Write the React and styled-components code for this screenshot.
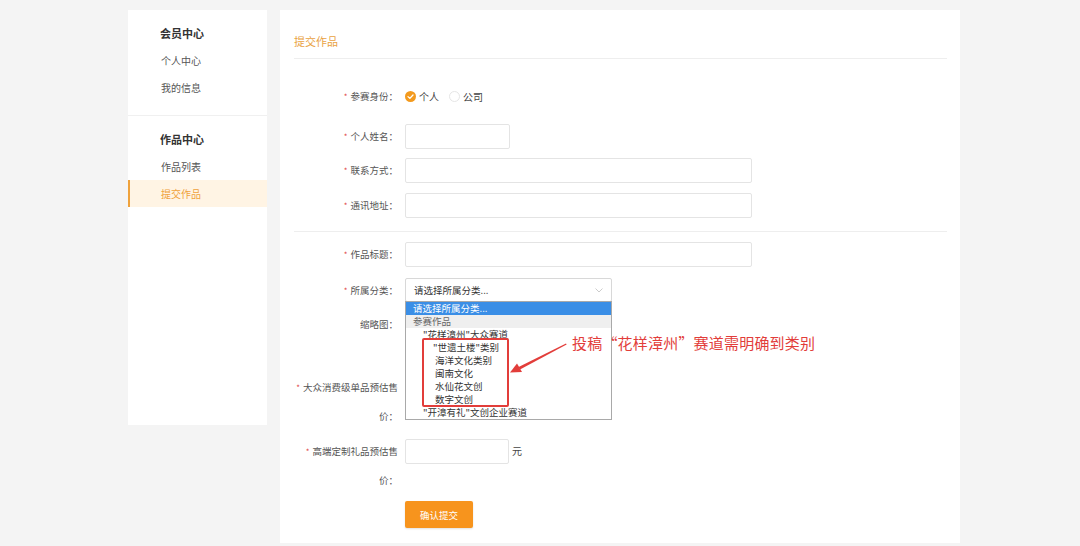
import React from "react";
import styled, { createGlobalStyle } from "styled-components";

const GlobalStyle = createGlobalStyle`
  * {
    box-sizing: border-box;
  }
  body {
    margin: 0;
    background: #f4f4f4;
    font-family: "Noto Sans CJK SC", "Noto Sans", sans-serif;
    color: #333;
  }
`;

const Page = styled.div`
  display: flex;
  align-items: flex-start;
  gap: 13px;
  padding: 10px 0 0 128px;
  height: 546px;
`;

/* ---------- sidebar ---------- */

const Sidebar = styled.aside`
  width: 139px;
  height: 415px;
  background: #fff;
`;

const MenuGroup = styled.div`
  padding: ${(p) => (p.$last ? "10px 0 0" : "10px 0 14px")};
  border-bottom: ${(p) => (p.$last ? "none" : "1px solid #f0f0f0")};
`;

const MenuTitle = styled.div`
  height: 27px;
  line-height: 27px;
  padding-left: 32px;
  font-size: 11px;
  font-weight: bold;
  color: #333;
`;

const MenuItem = styled.div`
  height: 27px;
  line-height: 27px;
  padding-left: ${(p) => (p.$active ? "31px" : "33px")};
  font-size: 10px;
  color: ${(p) => (p.$active ? "#efa23c" : "#555")};
  background: ${(p) => (p.$active ? "#fff4e4" : "transparent")};
  border-left: ${(p) => (p.$active ? "2px solid #efa23c" : "none")};
`;

/* ---------- main panel ---------- */

const Main = styled.main`
  position: relative;
  width: 680px;
  height: 533px;
  background: #fff;
  padding: 0 13px 0 14px;
`;

const Header = styled.div`
  padding: 22px 0 8px;
  border-bottom: 1px solid #eeeeee;
  font-size: 11px;
  line-height: 18px;
  color: #e9a23f;
`;

const Section = styled.div`
  display: flex;
  flex-direction: column;
  padding-bottom: ${(p) => p.$pb || 0}px;
  border-bottom: ${(p) => (p.$line ? "1px solid #eeeeee" : "none")};
`;

const Row = styled.div`
  display: flex;
  align-items: flex-start;
  gap: 7px;
  margin-top: ${(p) => p.$mt || 0}px;
  min-height: ${(p) => p.$h || 0}px;
`;

const Label = styled.div`
  flex: none;
  width: 104px;
  text-align: right;
  font-size: 9.5px;
  line-height: ${(p) => p.$lh || 25}px;
  color: #555;
`;

const Req = styled.span`
  color: #e04545;
  font-size: 8px;
  margin-right: 3px;
`;

const Input = styled.div`
  width: ${(p) => p.$w}px;
  height: 25px;
  margin-top: ${(p) => p.$mt || 0}px;
  border: 1px solid #e4e4e4;
  border-radius: 2px;
  background: #fff;
`;

const Unit = styled.span`
  font-size: 10px;
  line-height: 28px;
  color: #444;
  margin-left: -4px;
`;

const RadioGroup = styled.div`
  display: flex;
  align-items: center;
  height: 25px;
  gap: 10px;
`;

const RadioOption = styled.label`
  display: flex;
  align-items: center;
  gap: 3px;
  font-size: 10px;
  color: #444;
`;

const RadioEmpty = styled.span`
  width: 11px;
  height: 11px;
  border-radius: 50%;
  border: 1px solid #e6e6e6;
`;

const SelectWrap = styled.div`
  position: relative;
  width: 207px;
`;

const Select = styled.div`
  display: flex;
  align-items: center;
  justify-content: space-between;
  height: 24px;
  padding: 0 8px 0 8px;
  border: 1px solid #d8d8d8;
  border-radius: 2px;
  font-size: 9.5px;
  color: #333;
`;

const Dropdown = styled.ul`
  position: absolute;
  z-index: 5;
  top: 23px;
  left: 0;
  width: 207px;
  margin: 0;
  padding: 0;
  list-style: none;
  background: #fff;
  border: 1px solid #a9a9a9;
`;

const Option = styled.li`
  height: 13px;
  line-height: 13px;
  padding-left: ${(p) => 7 + p.$level * 10}px;
  font-size: 9.5px;
  white-space: nowrap;
  color: ${(p) => (p.$selected ? "#fff" : p.$group ? "#666" : "#333")};
  background: ${(p) =>
    p.$selected ? "#3a8ee6" : p.$group ? "#efefef" : "transparent"};
`;

const UploadSlot = styled.div`
  width: 80px;
  height: 50px;
  border: 1px dashed #ddd;
`;

const SubmitButton = styled.button`
  width: 68px;
  height: 27px;
  border: none;
  border-radius: 2px;
  background: #f7941d;
  color: #fff;
  font-family: inherit;
  font-size: 9.5px;
  box-shadow: 0 1px 2px rgba(0, 0, 0, 0.12);
`;

/* ---------- annotation overlay ---------- */

const MarkBox = styled.div`
  position: absolute;
  z-index: 6;
  left: 142px;
  top: 328px;
  width: 87px;
  height: 69px;
  border: 2px solid #e23d3a;
  border-radius: 2px;
`;

const MarkArrow = styled.svg`
  position: absolute;
  z-index: 6;
  left: 226px;
  top: 328px;
`;

const MarkText = styled.div`
  position: absolute;
  z-index: 6;
  left: 292px;
  top: 323px;
  font-size: 15px;
  line-height: 20px;
  letter-spacing: 0.2px;
  color: #e23d3a;
  white-space: nowrap;
`;

const categories = [
  { text: "请选择所属分类...", level: 0, selected: true },
  { text: "参赛作品", level: 0, group: true },
  { text: '"花样漳州"大众赛道', level: 1 },
  { text: '"世遗土楼"类别', level: 2 },
  { text: "海洋文化类别", level: 2.2 },
  { text: "闽南文化", level: 2.2 },
  { text: "水仙花文创", level: 2.2 },
  { text: "数字文创", level: 2.2 },
  { text: '"开漳有礼"文创企业赛道', level: 1 },
];

const CheckedRadio = () => (
  <svg width="11" height="11" viewBox="0 0 11 11">
    <circle cx="5.5" cy="5.5" r="5.5" fill="#f39a1e" />
    <polyline
      points="3,5.6 4.9,7.4 8,4"
      fill="none"
      stroke="#fff"
      strokeWidth="1.3"
      strokeLinecap="round"
      strokeLinejoin="round"
    />
  </svg>
);

const Chevron = () => (
  <svg width="8" height="5" viewBox="0 0 8 5">
    <polyline points="0.5,0.5 4,4 7.5,0.5" fill="none" stroke="#cccccc" strokeWidth="1" />
  </svg>
);

const App = () => {
  return (
    <>
      <GlobalStyle />
      <Page>
        <Sidebar>
          <MenuGroup>
            <MenuTitle>会员中心</MenuTitle>
            <MenuItem>个人中心</MenuItem>
            <MenuItem>我的信息</MenuItem>
          </MenuGroup>
          <MenuGroup $last>
            <MenuTitle>作品中心</MenuTitle>
            <MenuItem>作品列表</MenuItem>
            <MenuItem $active>提交作品</MenuItem>
          </MenuGroup>
        </Sidebar>

        <Main>
          <Header>提交作品</Header>

          <Section $line $pb={13}>
            <Row $mt={25}>
              <Label>
                <Req>*</Req>参赛身份：
              </Label>
              <RadioGroup>
                <RadioOption>
                  <CheckedRadio />
                  个人
                </RadioOption>
                <RadioOption>
                  <RadioEmpty />
                  公司
                </RadioOption>
              </RadioGroup>
            </Row>
            <Row $mt={15}>
              <Label>
                <Req>*</Req>个人姓名：
              </Label>
              <Input $w={105} />
            </Row>
            <Row $mt={9}>
              <Label>
                <Req>*</Req>联系方式：
              </Label>
              <Input $w={347} />
            </Row>
            <Row $mt={10}>
              <Label>
                <Req>*</Req>通讯地址：
              </Label>
              <Input $w={347} />
            </Row>
          </Section>

          <Section>
            <Row $mt={10}>
              <Label>
                <Req>*</Req>作品标题：
              </Label>
              <Input $w={347} />
            </Row>
            <Row $mt={11}>
              <Label $lh={24}>
                <Req>*</Req>所属分类：
              </Label>
              <SelectWrap>
                <Select>
                  <span>请选择所属分类...</span>
                  <Chevron />
                </Select>
                <Dropdown>
                  {categories.map((c) => (
                    <Option
                      key={c.text}
                      $level={c.level}
                      $selected={c.selected}
                      $group={c.group}
                    >
                      {c.text}
                    </Option>
                  ))}
                </Dropdown>
              </SelectWrap>
            </Row>
            <Row $mt={10} $h={50}>
              <Label $lh={22}>缩略图：</Label>
              <UploadSlot />
            </Row>
            <Row $mt={10}>
              <Label $lh={28}>
                <Req>*</Req>大众消费级单品预估售价：
              </Label>
              <Input $w={104} $mt={2} />
              <Unit>元</Unit>
            </Row>
            <Row $mt={7}>
              <Label $lh={28}>
                <Req>*</Req>高端定制礼品预估售价：
              </Label>
              <Input $w={104} $mt={2} />
              <Unit>元</Unit>
            </Row>
            <Row $mt={7}>
              <Label />
              <SubmitButton>确认提交</SubmitButton>
            </Row>
          </Section>

          <MarkBox />
          <MarkArrow width="64" height="40" viewBox="0 0 64 40">
            <polygon points="60,5.4 60.6,6.6 14,31.4 12.6,29" fill="#e23d3a" />
            <polygon points="4,34.5 11,25.5 16,34" fill="#e23d3a" />
          </MarkArrow>
          <MarkText>投稿“花样漳州”赛道需明确到类别</MarkText>
        </Main>
      </Page>
    </>
  );
};

export default App;
